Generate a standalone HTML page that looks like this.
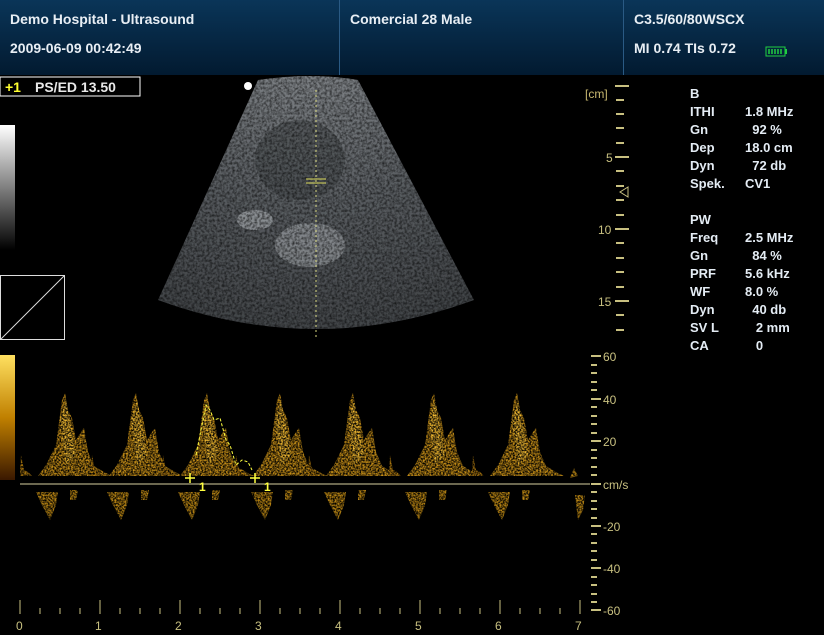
<!DOCTYPE html>
<html><head><meta charset="utf-8"><style>
html,body{margin:0;padding:0;background:#000;width:824px;height:635px;overflow:hidden;font-family:"Liberation Sans",sans-serif;}
.hdr{position:absolute;left:0;top:0;width:824px;height:75px;background:linear-gradient(#0a3558,#021a30);}
.div{position:absolute;top:0;width:1px;height:75px;background:#2a5a84;}
.t{position:absolute;color:#e8eef4;font-weight:bold;font-size:14px;white-space:nowrap;}
.p{position:absolute;color:#e4ecf4;font-weight:bold;font-size:13px;line-height:18px;white-space:pre;}
</style></head><body>
<div class="hdr"></div>
<div class="div" style="left:339px"></div>
<div class="div" style="left:623px"></div>
<div class="t" style="left:10px;top:11px">Demo Hospital - Ultrasound</div>
<div class="t" style="left:10px;top:40px">2009-06-09 00:42:49</div>
<div class="t" style="left:350px;top:11px">Comercial 28 Male</div>
<div class="t" style="left:634px;top:11px">C3.5/60/80WSCX</div>
<div class="t" style="left:634px;top:40px">MI 0.74 TIs 0.72</div>
<div class="p" style="left:690px;top:85px">B
ITHI
Gn
Dep
Dyn
Spek.

PW
Freq
Gn
PRF
WF
Dyn
SV L
CA</div>
<div class="p" style="left:745px;top:85px">
1.8 MHz
  92 %
18.0 cm
  72 db
CV1

 
2.5 MHz
  84 %
5.6 kHz
8.0 %
  40 db
   2 mm
   0</div>
<svg width="824" height="635" style="position:absolute;left:0;top:0" font-family="Liberation Sans,sans-serif">
<defs>
<radialGradient id="sg" cx="312" cy="-30" r="380" gradientUnits="userSpaceOnUse">
<stop offset="0.3" stop-color="#7a7e82"/><stop offset="0.6" stop-color="#5a5e62"/><stop offset="1" stop-color="#3e4144"/></radialGradient>
<linearGradient id="gb" x1="0" y1="0" x2="0" y2="1"><stop offset="0" stop-color="#fff"/><stop offset="1" stop-color="#000"/></linearGradient>
<linearGradient id="cb" x1="0" y1="0" x2="0" y2="1"><stop offset="0" stop-color="#ffe060"/><stop offset="0.5" stop-color="#c08000"/><stop offset="1" stop-color="#3a1800"/></linearGradient>
<filter id="nz" x="0" y="0" width="1" height="1">
<feTurbulence type="fractalNoise" baseFrequency="0.6" numOctaves="2" seed="3" result="n"/>
<feColorMatrix in="n" type="matrix" values="0 0 0 0 0  0 0 0 0 0  0 0 0 0 0  0 0 0 -2.2 1.6" result="m"/>
<feComposite in="SourceGraphic" in2="m" operator="in"/>
</filter>
<filter id="nz2" x="0" y="0" width="1" height="1">
<feTurbulence type="fractalNoise" baseFrequency="0.4" numOctaves="2" seed="7" result="n"/>
<feColorMatrix in="n" type="matrix" values="0 0 0 0 0  0 0 0 0 0  0 0 0 0 0  0 0 0 -1.2 1.4" result="m"/>
<feComposite in="SourceGraphic" in2="m" operator="in"/>
</filter>
<g id="w">
<path d="M-48,476 L-47,455 L-44,470 L-40,472 L-36,476 Z" fill="#b88010"/>
<path d="M-30,476 L-22,465 L-12,445 L-6,400 L-3,393 L0,410 L4,418 L8,440 L13,432 L16,428 L20,452 L26,466 L36,472 L44,476 Z" fill="#c89018"/>
<path d="M-8,420 L-2,400 L4,430 L8,455 L-2,465 Z" fill="#f0b830"/>
<path d="M-22,492 L-10,492 L-12,505 L-18,520 L-26,505 L-32,492 Z" fill="#c08a14"/>
<path d="M2,490 L10,490 L8,500 L2,500 Z" fill="#c08a14"/>
</g>
</defs>
<rect x="0" y="77" width="140" height="19" fill="none" stroke="#fff" stroke-width="1"/>
<text x="5" y="92" fill="#ffff30" font-size="14" font-weight="bold">+1</text>
<text x="35" y="92" fill="#e8e8e8" font-size="14" font-weight="bold">PS/ED   13.50</text>
<circle cx="248" cy="86" r="4" fill="#fff"/>
<g filter="url(#nz2)">
<path d="M258,80 Q312,72 358,80 L474,300 Q316,358 158,300 Z" fill="url(#sg)"/>
<ellipse cx="300" cy="160" rx="45" ry="40" fill="#3a3d40" opacity=".5"/>
<ellipse cx="310" cy="245" rx="35" ry="22" fill="#b8bcc0" opacity=".45"/>
<ellipse cx="255" cy="220" rx="18" ry="10" fill="#c8ccd0" opacity=".45"/>
</g>
<line x1="316" y1="90" x2="316" y2="340" stroke="#d8d880" stroke-dasharray="2,3" stroke-width="1"/>
<path d="M306,179 h20 M306,183 h20" stroke="#e0e060" stroke-width="1"/>
<rect x="0" y="125" width="15" height="125" fill="url(#gb)"/>
<rect x="0.5" y="275.5" width="64" height="64" fill="none" stroke="#ddd"/>
<line x1="1" y1="339" x2="64" y2="276" stroke="#ddd"/>
<rect x="0" y="355" width="15" height="125" fill="url(#cb)"/>
<text x="585" y="98" fill="#c8b870" font-size="12">[cm]</text>
<g stroke="#c8c080" stroke-width="2">
<path d="M615,86h14 M615,157h14 M615,229h14 M615,301h14"/>
<path d="M616,100h8 M616,114h8 M616,128h8 M616,143h8 M616,171h8 M616,186h8 M616,200h8 M616,215h8 M616,243h8 M616,258h8 M616,272h8 M616,287h8 M616,315h8 M616,330h8"/>
</g>
<text x="606" y="162" fill="#c8c080" font-size="12">5</text>
<text x="598" y="234" fill="#c8c080" font-size="12">10</text>
<text x="598" y="306" fill="#c8c080" font-size="12">15</text>
<path d="M628,187 l-8,5 l8,5 z" fill="none" stroke="#c8c080"/>
<g filter="url(#nz)">
<use href="#w" x="68"/><use href="#w" x="139"/><use href="#w" x="210"/><use href="#w" x="283"/><use href="#w" x="356"/><use href="#w" x="437"/><use href="#w" x="520"/>
<path d="M570,478 L574,468 L578,476 Z M575,495 L585,495 L583,510 L578,520 Z" fill="#c08a14"/>
</g>
<path d="M196,455 L201,430 L206,405 L210,410 L214,420 L220,418 L226,440 L230,445 L236,465 L242,460 L248,462 L252,470" fill="none" stroke="#ffff40" stroke-dasharray="3,2"/>
<line x1="20" y1="484" x2="590" y2="484" stroke="#d8d0a0" stroke-width="1"/>
<g stroke="#ffff40" stroke-width="1.5"><path d="M185,478h10 M190,473v10 M250,478h10 M255,473v10"/></g>
<text x="199" y="491" fill="#ffff40" font-size="12" font-weight="bold">1</text>
<text x="264" y="491" fill="#ffff40" font-size="12" font-weight="bold">1</text>
<g stroke="#c8c080" stroke-width="2">
<path d="M591,356h10 M591,399h10 M591,441h10 M591,484h10 M591,526h10 M591,568h10 M591,610h10"/>
<path d="M591,365h6 M591,373h6 M591,382h6 M591,390h6 M591,407h6 M591,416h6 M591,424h6 M591,433h6 M591,450h6 M591,458h6 M591,467h6 M591,475h6 M591,492h6 M591,501h6 M591,509h6 M591,518h6 M591,534h6 M591,543h6 M591,551h6 M591,560h6 M591,577h6 M591,585h6 M591,594h6 M591,602h6"/>
</g>
<g fill="#c8c080" font-size="12">
<text x="603" y="361">60</text><text x="603" y="404">40</text><text x="603" y="446">20</text><text x="603" y="489">cm/s</text>
<text x="603" y="531">-20</text><text x="603" y="573">-40</text><text x="603" y="615">-60</text>
<text x="16" y="630">0</text><text x="95" y="630">1</text><text x="175" y="630">2</text><text x="255" y="630">3</text><text x="335" y="630">4</text><text x="415" y="630">5</text><text x="495" y="630">6</text><text x="575" y="630">7</text>
</g>
<g stroke="#c8c080" stroke-width="1">
<path d="M20,600v14 M100,600v14 M180,600v14 M260,600v14 M340,600v14 M420,600v14 M500,600v14 M580,600v14"/>
<path d="M40,608v6 M60,608v6 M80,608v6 M120,608v6 M140,608v6 M160,608v6 M200,608v6 M220,608v6 M240,608v6 M280,608v6 M300,608v6 M320,608v6 M360,608v6 M380,608v6 M400,608v6 M440,608v6 M460,608v6 M480,608v6 M520,608v6 M540,608v6 M560,608v6"/>
</g>
<rect x="766" y="47" width="19" height="9" fill="none" stroke="#20d040"/>
<rect x="785" y="49" width="2" height="5" fill="#20d040"/>
<path d="M769,49v5 M772,49v5 M775,49v5 M778,49v5 M781,49v5" stroke="#20d040" stroke-width="1.5"/>
</svg>
</body></html>
